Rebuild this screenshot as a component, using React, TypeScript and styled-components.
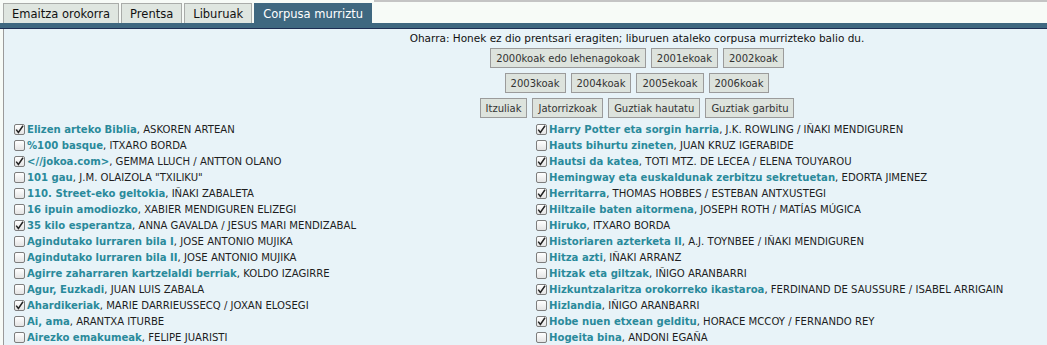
import React from "react";
import styled, { createGlobalStyle } from "styled-components";

const GlobalStyle = createGlobalStyle`
  body {
    margin: 0;
    overflow: hidden;
    background-color: #f7fbf7;
    font-family: "DejaVu Sans", Verdana, sans-serif;
    color: #222;
  }
`;

const Page = styled.div`
  width: 1270px;
`;

const TabBar = styled.ul`
  list-style: none;
  margin: 0;
  padding: 3px 0 0 3px;
  display: flex;
  gap: 2px;
`;

const Tab = styled.li<{ $active?: boolean }>`
  height: 20px;
  box-sizing: border-box;
  padding: 0 8px;
  display: flex;
  align-items: center;
  font-size: 11.5px;
  border: 1px solid ${(p) => (p.$active ? "#3f6880" : "#a9aca9")};
  border-bottom: 0;
  background-color: ${(p) => (p.$active ? "#3f6880" : "#dfe6e0")};
  color: ${(p) => (p.$active ? "#fff" : "#111")};
`;

// thin grey rule along the top edge, right of the tabs
const TopRule = styled.li`
  flex: 1;
  align-self: flex-start;
  height: 2px;
  margin-top: -3px;
  background-color: #c4c4c4;
`;

const Strip = styled.div`
  height: 5px;
  background-color: #3f6880;
  border-bottom: 1px solid #1d2d52;
`;

const Content = styled.div`
  margin-left: 3px;
  width: 1266px;
  min-height: 340px;
  background-color: #e8f3f8;
  border-left: 1px solid #9a9a9a;
  padding-top: 3px;
`;

const Note = styled.p`
  margin: 0 0 4px 0;
  text-align: center;
  font-size: 10.5px;
  line-height: 12px;
  color: #111;
`;

const Buttons = styled.div`
  display: flex;
  flex-direction: column;
  gap: 5px;
`;

const ButtonRow = styled.div`
  display: flex;
  justify-content: center;
  gap: 5px;
`;

const Button = styled.button`
  height: 20px;
  padding: 0 5px;
  font-family: inherit;
  font-size: 10px;
  color: #333;
  background-color: #dde3dd;
  border: 1px solid #9b9b9b;
  border-radius: 0;
`;

const List = styled.div`
  display: grid;
  grid-template-columns: 522px 522px;
  padding: 3px 0 0 10px;
`;

const Column = styled.div`
  display: flex;
  flex-direction: column;
`;

const Row = styled.div`
  display: flex;
  align-items: center;
  height: 16px;
  font-size: 10.1px;
  white-space: nowrap;
`;

const Box = styled.span`
  width: 11px;
  height: 11px;
  flex-shrink: 0;
  box-sizing: border-box;
  border: 1px solid #7d7d7d;
  border-radius: 2px;
  background: linear-gradient(#ffffff, #e4e4e4);
  margin-right: 2px;
  display: flex;
  align-items: center;
  justify-content: center;
`;

const Title = styled.span`
  font-weight: bold;
  color: #2a8a9b;
`;

const Author = styled.span`
  color: #1e1e1e;
`;

type Book = [boolean, string, string];

const left: Book[] = [
  [true, "Elizen arteko Biblia", "ASKOREN ARTEAN"],
  [false, "%100 basque", "ITXARO BORDA"],
  [true, "<//jokoa.com>", "GEMMA LLUCH / ANTTON OLANO"],
  [false, "101 gau", 'J.M. OLAIZOLA "TXILIKU"'],
  [false, "110. Street-eko geltokia", "IÑAKI ZABALETA"],
  [false, "16 ipuin amodiozko", "XABIER MENDIGUREN ELIZEGI"],
  [true, "35 kilo esperantza", "ANNA GAVALDA / JESUS MARI MENDIZABAL"],
  [false, "Agindutako lurraren bila I", "JOSE ANTONIO MUJIKA"],
  [false, "Agindutako lurraren bila II", "JOSE ANTONIO MUJIKA"],
  [false, "Agirre zaharraren kartzelaldi berriak", "KOLDO IZAGIRRE"],
  [false, "Agur, Euzkadi", "JUAN LUIS ZABALA"],
  [true, "Ahardikeriak", "MARIE DARRIEUSSECQ / JOXAN ELOSEGI"],
  [false, "Ai, ama", "ARANTXA ITURBE"],
  [false, "Airezko emakumeak", "FELIPE JUARISTI"],
];

const right: Book[] = [
  [true, "Harry Potter eta sorgin harria", "J.K. ROWLING / IÑAKI MENDIGUREN"],
  [false, "Hauts bihurtu zineten", "JUAN KRUZ IGERABIDE"],
  [true, "Hautsi da katea", "TOTI MTZ. DE LECEA / ELENA TOUYAROU"],
  [false, "Hemingway eta euskaldunak zerbitzu sekretuetan", "EDORTA JIMENEZ"],
  [true, "Herritarra", "THOMAS HOBBES / ESTEBAN ANTXUSTEGI"],
  [true, "Hiltzaile baten aitormena", "JOSEPH ROTH / MATÍAS MÚGICA"],
  [false, "Hiruko", "ITXARO BORDA"],
  [true, "Historiaren azterketa II", "A.J. TOYNBEE / IÑAKI MENDIGUREN"],
  [false, "Hitza azti", "IÑAKI ARRANZ"],
  [false, "Hitzak eta giltzak", "IÑIGO ARANBARRI"],
  [true, "Hizkuntzalaritza orokorreko ikastaroa", "FERDINAND DE SAUSSURE / ISABEL ARRIGAIN"],
  [false, "Hizlandia", "IÑIGO ARANBARRI"],
  [true, "Hobe nuen etxean gelditu", "HORACE MCCOY / FERNANDO REY"],
  [false, "Hogeita bina", "ANDONI EGAÑA"],
];

const tabs = ["Emaitza orokorra", "Prentsa", "Liburuak", "Corpusa murriztu"];

const buttonRows = [
  ["2000koak edo lehenagokoak", "2001ekoak", "2002koak"],
  ["2003koak", "2004koak", "2005ekoak", "2006koak"],
  ["Itzuliak", "Jatorrizkoak", "Guztiak hautatu", "Guztiak garbitu"],
];

function Check({ on }: { on: boolean }) {
  return (
    <Box>
      {on && (
        <svg width="9" height="9" viewBox="0 0 9 9">
          <path d="M1.2 4.6 L3.4 7.4 L8 0.8" fill="none" stroke="#222" strokeWidth="1.5" />
        </svg>
      )}
    </Box>
  );
}

function BookColumn({ books }: { books: Book[] }) {
  return (
    <Column>
      {books.map(([on, title, author]) => (
        <Row key={title}>
          <Check on={on} />
          <Title>{title}</Title>
          <Author>, {author}</Author>
        </Row>
      ))}
    </Column>
  );
}

export default function App() {
  return (
    <>
      <GlobalStyle />
      <Page>
        <TabBar>
          {tabs.map((t, i) => (
            <Tab key={t} $active={i === 3}>{t}</Tab>
          ))}
          <TopRule />
        </TabBar>
        <Strip />
        <Content>
          <Note>Oharra: Honek ez dio prentsari eragiten; liburuen ataleko corpusa murrizteko balio du.</Note>
          <Buttons>
            {buttonRows.map((row, i) => (
              <ButtonRow key={i}>
                {row.map((b) => (
                  <Button key={b}>{b}</Button>
                ))}
              </ButtonRow>
            ))}
          </Buttons>
          <List>
            <BookColumn books={left} />
            <BookColumn books={right} />
          </List>
        </Content>
      </Page>
    </>
  );
}
